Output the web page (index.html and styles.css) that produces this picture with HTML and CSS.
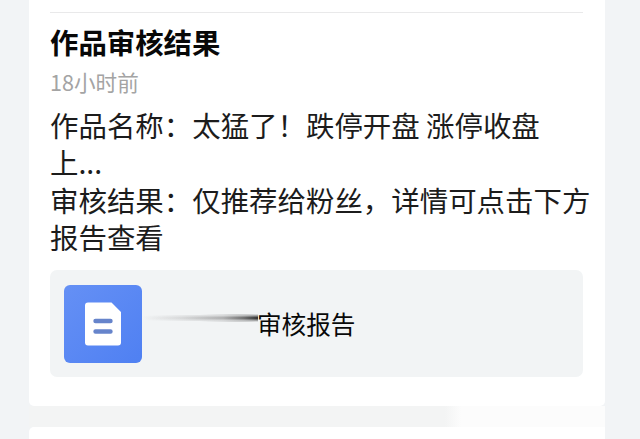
FILE: index.html
```
<!DOCTYPE html>
<html lang="zh-CN">
<head>
<meta charset="utf-8">
<title>作品审核结果</title>
<link rel="stylesheet" href="styles.css">
</head>
<body>
<main class="feed">
  <article class="card">
    <hr class="divider">
    <h1 class="title">作品审核结果</h1>
    <p class="time">18小时前</p>
    <div class="message">
      <p>作品名称：太猛了！跌停开盘 涨停收盘<br>上...</p>
      <p>审核结果：仅推荐给粉丝，详情可点击下方<br>报告查看</p>
    </div>
    <div class="report">
      <svg class="report-icon" viewBox="0 0 78 78" aria-hidden="true">
        <defs>
          <linearGradient id="tile" x1="0" y1="0" x2="1" y2="1">
            <stop offset="0" stop-color="#6590f5"/>
            <stop offset="1" stop-color="#4f80f2"/>
          </linearGradient>
        </defs>
        <rect width="78" height="78" rx="6" fill="url(#tile)"/>
        <path d="M24 17.500H47.500L57 27V57.500a3 3 0 0 1-3 3H24a3 3 0 0 1-3-3V20.500a3 3 0 0 1 3-3z" fill="#fff"/>
        <path d="M31.500 36H46.500M31.500 46.500H46.500" stroke="#6684cb" stroke-width="4.400" stroke-linecap="round"/>
      </svg>
      <span class="streak"></span>
      <span class="report-label">审核报告</span>
    </div>
  </article>
  <div class="gap"><span class="patch"></span></div>
  <article class="card next"></article>
</main>
</body>
</html>
```
FILE: styles.css
```
* {
  box-sizing: border-box;
}

body {
  margin: 0;
  background: #f2f4f6;
  color: #1c1c1c;
  font-family: "Noto Sans CJK SC", sans-serif;
}

.feed {
  width: 576px;
  margin-left: 28.500px;
}

.card {
  height: 406px;
  padding: 12px 21.500px 0;
  background: #fff;
  border-radius: 0 0 5px 5px;
}

.divider {
  height: 1px;
  margin: 0;
  border: 0;
  background: #e9e9ea;
}

.title {
  margin: 8px 0 0;
  color: #080808;
  font-size: 28.400px;
  font-weight: 700;
  line-height: 42px;
}

.time {
  margin: 4px 0 0;
  color: #a4a4a4;
  font-size: 21.600px;
  font-weight: 400;
  line-height: 30px;
}

.message {
  margin-top: 9px;
  font-size: 28.450px;
  line-height: 37.300px;
  white-space: nowrap;
}

.message p {
  margin: 0;
}

.report {
  display: flex;
  align-items: center;
  height: 107px;
  margin-top: 15.300px;
  padding-left: 14px;
  background: #f2f4f5;
  border-radius: 7px;
}

.report-icon {
  flex: none;
  width: 78px;
  height: 78px;
}

.streak {
  width: 116px;
  height: 8px;
  margin-bottom: 12px;
  background:
    linear-gradient(to bottom, #f2f4f5, transparent 50%, #f2f4f5),
    linear-gradient(to right, #f2f4f5 0%, #d4d5d6 35%, #a8a8a9 70%, #606060 88%, #181818 100%);
  clip-path: polygon(0 25%, 100% 0, 100% 100%, 0 75%);
}

.report-label {
  color: #090909;
  font-size: 24.600px;
  line-height: 36px;
  margin: 0 0 1px -1px;
}

.gap {
  display: flex;
  justify-content: flex-end;
  height: 21px;
  background: #f3f4f4;
}

.patch {
  width: 160px;
  background: linear-gradient(to right, #f3f4f4, #fcfcfc 10%);
}

.next {
  height: 12px;
  padding: 0;
  border-radius: 5px 0 0 0;
}
```
